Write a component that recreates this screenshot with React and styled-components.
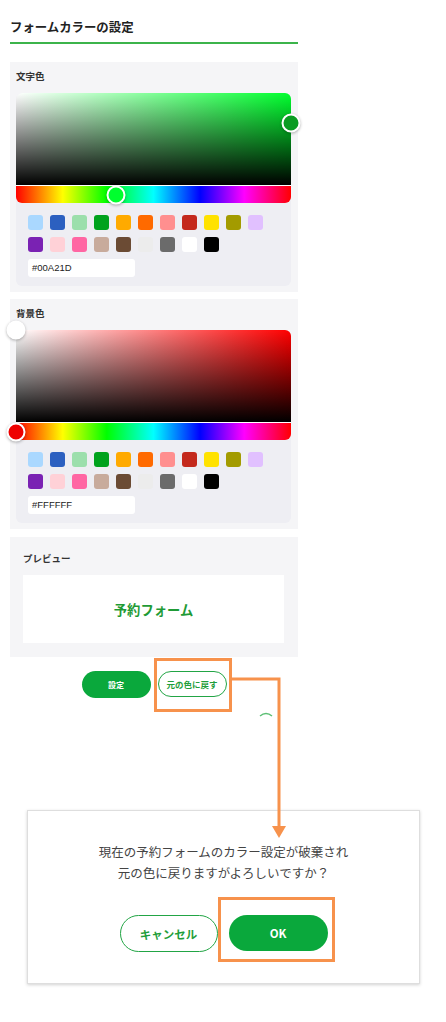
import React from 'react'
import styled, { createGlobalStyle } from 'styled-components'

const GlobalStyle = createGlobalStyle`
  body {
    margin: 0;
    background: #fff;
    font-family: "Noto Sans CJK JP", "Noto Sans", sans-serif;
    color: #333;
  }
`

const Page = styled.div`
  position: relative;
  width: 446px;
  height: 1022px;
  overflow: hidden;
`

const Column = styled.div`
  width: 288px;
  margin-left: 10px;
  padding-top: 19px;
`

const Title = styled.h1`
  margin: 0;
  font-size: 12.4px;
  line-height: 16px;
  font-weight: 700;
  color: #222;
  padding-bottom: 7px;
  border-bottom: 2px solid #3cb44b;
`

const Card = styled.section`
  background: #f5f5f7;
  margin-top: ${props => props.gap}px;
  padding: 8px 7px 6px 6px;
`

const CardLabel = styled.div`
  font-size: 9.5px;
  line-height: 12px;
  font-weight: 700;
  color: #333;
  margin-bottom: 11px;
`

const PickerBox = styled.div`
  background: #eeeef3;
  border-radius: 6px;
  padding-bottom: 9px;
`

const Saturation = styled.div`
  position: relative;
  height: 92px;
  border-radius: 6px 6px 0 0;
  background:
    linear-gradient(to top, #000, rgba(0, 0, 0, 0)),
    linear-gradient(to right, #fff, ${props => props.hue});
`

const HueBar = styled.div`
  position: relative;
  height: 17px;
  border-top: 1px solid #fff;
  border-radius: 0 0 6px 6px;
  background: linear-gradient(to right, #f00 0%, #ff0 17%, #0f0 33%, #0ff 50%, #00f 67%, #f0f 83%, #f00 100%);
`

const Thumb = styled.span`
  position: absolute;
  width: 15px;
  height: 15px;
  border-radius: 50%;
  border: 2px solid #fff;
  background: ${props => props.color};
  box-shadow: 0 1px 3px rgba(0, 0, 0, 0.3);
  transform: translate(-50%, -50%);
`

const Swatches = styled.div`
  display: grid;
  grid-template-columns: repeat(11, 15px);
  grid-auto-rows: 15px;
  column-gap: 7px;
  row-gap: 7px;
  padding: 12px 0 0 12px;
`

const Swatch = styled.span`
  width: 15px;
  height: 15px;
  border-radius: 3px;
  background: ${props => props.color};
`

const HexInput = styled.div`
  width: 103px;
  height: 18px;
  margin: 7px 0 0 12px;
  padding-left: 4px;
  background: #fff;
  border-radius: 3px;
  font-family: "Liberation Sans", Arial, sans-serif;
  font-size: 9.5px;
  line-height: 18px;
  color: #222;
`

const PreviewCard = styled.section`
  background: #f5f5f7;
  margin-top: 8px;
  padding: 15px 14px 14px 13px;
`

const PreviewBox = styled.div`
  height: 68px;
  background: #fff;
  display: flex;
  align-items: center;
  justify-content: center;
  font-size: 13.3px;
  font-weight: 700;
  color: #1f9b36;
`

const ButtonRow = styled.div`
  display: flex;
  justify-content: center;
  gap: 7px;
  margin-top: 14px;
`

const Pill = styled.button`
  box-sizing: border-box;
  width: ${props => props.w}px;
  height: ${props => props.h}px;
  border-radius: 999px;
  border: ${props => (props.solid ? 'none' : '1.5px solid #22a545')};
  background: ${props => (props.solid ? '#0aa83c' : '#fff')};
  color: ${props => (props.solid ? '#fff' : '#1f9e3b')};
  font-family: "Noto Sans CJK JP", "Noto Sans", sans-serif;
  font-size: ${props => props.fs}px;
  font-weight: 700;
  padding: 0;
  display: flex;
  align-items: center;
  justify-content: center;
`

const Dialog = styled.div`
  width: 391px;
  margin: 112px 0 0 27px;
  padding: 31px 0 31px;
  background: #fff;
  border: 1px solid #dedede;
  box-shadow: 0 1px 3px rgba(0, 0, 0, 0.18);
`

const DialogText = styled.p`
  margin: 0;
  text-align: center;
  font-size: 12.5px;
  line-height: 20.5px;
  color: #444;
`

const DialogButtons = styled.div`
  display: flex;
  justify-content: center;
  gap: 11px;
  margin-top: 32px;
`

const Highlight = styled.div`
  position: absolute;
  box-sizing: border-box;
  left: ${props => props.x}px;
  top: ${props => props.y}px;
  width: ${props => props.w}px;
  height: ${props => props.h}px;
  border: 3px solid #f7924c;
`

const Overlay = styled.svg`
  position: absolute;
  left: 0;
  top: 0;
  pointer-events: none;
`

const palette = [
  '#aad8ff', '#2c60c0', '#9cdfac', '#00a21d', '#ffaa00', '#ff6a00', '#ff8f8f', '#c4291d', '#ffe200', '#a39b00', '#e1c0ff',
  '#7a22b3', '#ffd1d7', '#ff66a3', '#c8ab9c', '#6b4b34', '#ececec', '#6b6b6b', '#ffffff', '#000000'
]

function ColorPicker({ hue, satX, satY, satColor, hueX, hueColor, value }) {
  return (
    <PickerBox>
      <Saturation hue={hue}>
        <Thumb color={satColor} style={{ left: `${satX}%`, top: `${satY}%` }} />
      </Saturation>
      <HueBar>
        <Thumb color={hueColor} style={{ left: `${hueX}%`, top: '50%' }} />
      </HueBar>
      <Swatches>
        {palette.map(c => <Swatch key={c} color={c} />)}
      </Swatches>
      <HexInput>{value}</HexInput>
    </PickerBox>
  )
}

export default function App() {
  return (
    <Page>
      <GlobalStyle />
      <Column>
        <Title>フォームカラーの設定</Title>
        <Card gap={18}>
          <CardLabel>文字色</CardLabel>
          <ColorPicker hue="#00ff2e" satX={100} satY={33} satColor="#0a9c22" hueX={36.4} hueColor="#00ff2e" value="#00A21D" />
        </Card>
        <Card gap={7}>
          <CardLabel>背景色</CardLabel>
          <ColorPicker hue="#ff0000" satX={0} satY={0} satColor="#ffffff" hueX={0} hueColor="#ee0000" value="#FFFFFF" />
        </Card>
        <PreviewCard>
          <CardLabel>プレビュー</CardLabel>
          <PreviewBox>予約フォーム</PreviewBox>
        </PreviewCard>
        <ButtonRow>
          <Pill solid w={69} h={27} fs={8}>設定</Pill>
          <Pill w={69} h={26} fs={8.5}>元の色に戻す</Pill>
        </ButtonRow>
      </Column>

      <Dialog>
        <DialogText>現在の予約フォームのカラー設定が破棄され</DialogText>
        <DialogText>元の色に戻りますがよろしいですか？</DialogText>
        <DialogButtons>
          <Pill w={98} h={37} fs={11.5}>キャンセル</Pill>
          <Pill solid w={99} h={36} fs={11.5}>OK</Pill>
        </DialogButtons>
      </Dialog>

      <Highlight x={154} y={658} w={78} h={54} />
      <Highlight x={218} y={897} w={117} h={65} />
      <Overlay width="446" height="1022" viewBox="0 0 446 1022">
        <path d="M260 716 Q266 711 272 716" fill="none" stroke="#5cbf74" strokeWidth="1.5" />
        <path d="M231 679 H279 V828" fill="none" stroke="#f7924c" strokeWidth="3" />
        <polygon points="272,826 286,826 279,838" fill="#f7924c" />
      </Overlay>
    </Page>
  )
}
